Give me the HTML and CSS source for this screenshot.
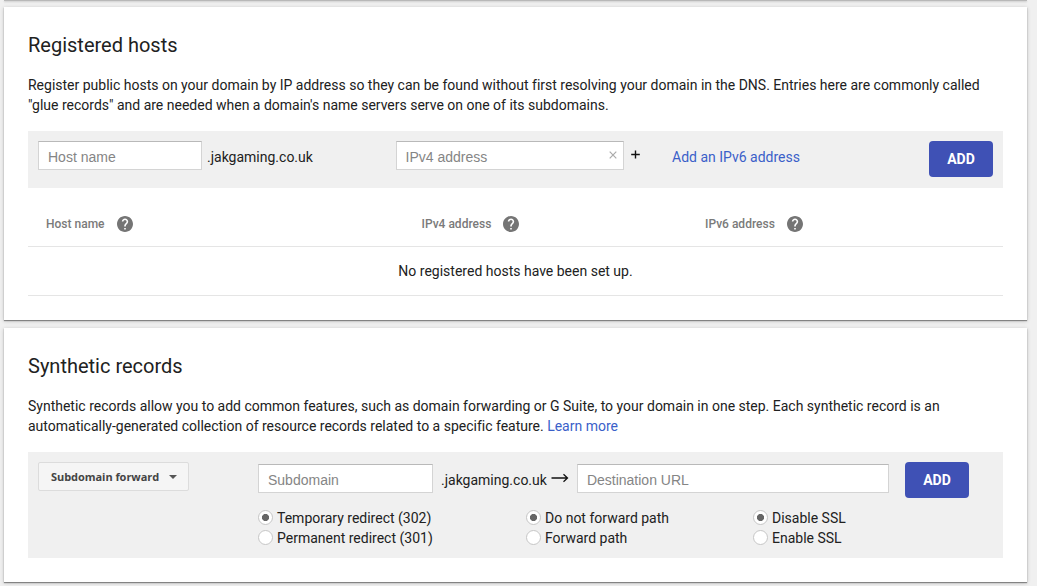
FILE: index.html
```html
<!DOCTYPE html>
<html lang="en">
<head>
<meta charset="utf-8">
<title>DNS settings</title>
<link rel="stylesheet" href="styles.css">
</head>
<body>
<svg class="defs" aria-hidden="true">
  <symbol id="help" viewBox="2 2 20 20"><path d="M12 2C6.48 2 2 6.48 2 12s4.480 10 10 10 10-4.480 10-10S17.520 2 12 2zm1 17h-2v-2h2v2zm2.070-7.750l-.9.920C13.450 12.900 13 13.500 13 15h-2v-.5c0-1.100.45-2.100 1.170-2.830l1.240-1.260c.37-.36.59-.86.59-1.410 0-1.100-.9-2-2-2s-2 .9-2 2H8c0-2.210 1.790-4 4-4s4 1.790 4 4c0 .88-.36 1.680-.93 2.250z"/></symbol>
</svg>
<div class="previous-card"></div>
<main class="page">
  <section class="card">
    <h2 class="title">Registered hosts</h2>
    <p class="intro">Register public hosts on your domain by IP address so they can be found without first resolving your domain in the DNS. Entries here are commonly called<br>"glue records" and are needed when a domain's name servers serve on one of its subdomains.</p>
    <form class="panel hosts-form">
      <input class="field host-field" type="text" placeholder="Host name">
      <span class="suffix">.jakgaming.co.uk</span>
      <div class="field-wrap">
        <input class="field ip-field" type="text" placeholder="IPv4 address">
        <svg class="clear" viewBox="0 0 8 8"><path d="M.7.7l6.600 6.600M7.300.7L.7 7.300"/></svg>
      </div>
      <svg class="plus" viewBox="0 0 9 9"><path d="M4.500.5v8M.2 4.500h8.600"/></svg>
      <a class="link add-v6">Add an IPv6 address</a>
      <button class="add" type="button">ADD</button>
    </form>
    <div class="table-head">
      <div class="col">Host name<svg class="help"><use href="#help"/></svg></div>
      <div class="col">IPv4 address<svg class="help"><use href="#help"/></svg></div>
      <div class="col">IPv6 address<svg class="help"><use href="#help"/></svg></div>
    </div>
    <div class="table-empty">No registered hosts have been set up.</div>
  </section>
  <section class="card">
    <h2 class="title">Synthetic records</h2>
    <p class="intro">Synthetic records allow you to add common features, such as domain forwarding or G Suite, to your domain in one step. Each synthetic record is an<br>automatically-generated collection of resource records related to a specific feature. <a class="link">Learn more</a></p>
    <form class="panel synthetic-form">
      <button class="select" type="button">Subdomain forward<span class="caret"></span></button>
      <div class="forward">
        <div class="forward-row">
          <input class="field sub-field" type="text" placeholder="Subdomain">
          <span class="suffix">.jakgaming.co.uk</span>
          <svg class="arrow" viewBox="0 0 18 10"><path d="M.5 5h16M12.500 1.300L16.500 5l-4 3.700"/></svg>
          <input class="field dest-field" type="text" placeholder="Destination URL">
        </div>
        <div class="options">
          <div class="group">
            <label class="option"><input class="radio" type="radio" name="redirect" checked>Temporary redirect (302)</label>
            <label class="option"><input class="radio" type="radio" name="redirect">Permanent redirect (301)</label>
          </div>
          <div class="group">
            <label class="option"><input class="radio" type="radio" name="path" checked>Do not forward path</label>
            <label class="option"><input class="radio" type="radio" name="path">Forward path</label>
          </div>
          <div class="group">
            <label class="option"><input class="radio" type="radio" name="ssl" checked>Disable SSL</label>
            <label class="option"><input class="radio" type="radio" name="ssl">Enable SSL</label>
          </div>
        </div>
      </div>
      <button class="add" type="button">ADD</button>
    </form>
  </section>
</main>
</body>
</html>
```
FILE: styles.css
```css
* { box-sizing: border-box; }
body {
  margin: 0;
  height: 586px;
  overflow: hidden;
  background: #f0f0f0;
  color: #212121;
  font: 14px/20px Roboto, sans-serif;
}
.defs { display: none; }
.previous-card {
  height: 1px;
  margin: 0 10px 0 4px;
  background: #b8b8b8;
  box-shadow: 0 1px 2px rgba(0, 0, 0, .2);
}
.page {
  display: flex;
  flex-direction: column;
  gap: 8px;
  padding: 6px 10px 0 4px;
}
.card {
  padding: 24px;
  background: #fff;
  box-shadow: 0 1px 1px rgba(0, 0, 0, .38), 0 1px 4px rgba(0, 0, 0, .2);
}
.title {
  margin: 0 0 16px;
  font-size: 20px;
  font-weight: 400;
  line-height: 28px;
}
.intro { margin: 0 0 16px; white-space: nowrap; letter-spacing: -.004px; }
.link { color: #3b5fc9; }
.panel {
  display: flex;
  align-items: flex-start;
  padding: 10px;
  background: #f0f0f0;
}
.hosts-form { height: 57px; }
.synthetic-form { height: 106px; }
.field {
  display: block;
  height: 29px;
  margin: 0;
  padding: 3px 9px 0;
  border: 1px solid #d4d4d4;
  border-top-color: #b9b9b9;
  border-radius: 0;
  background: #fff;
  color: #212121;
  font: 14px "Liberation Sans", sans-serif;
}
.field::placeholder { color: #858585; opacity: 1; }
.host-field { width: 164px; }
.ip-field { width: 228px; padding-left: 8.500px; }
.sub-field { width: 175px; }
.dest-field { width: 312px; }
.hosts-form .suffix { width: 189px; margin: 6px 0 0 5px; }
.field-wrap { position: relative; }
.clear {
  position: absolute;
  top: 10px;
  right: 7px;
  width: 8px;
  height: 8px;
  fill: none;
  stroke: #aaa;
  stroke-width: 1.2;
}
.plus {
  width: 9px;
  height: 9px;
  margin: 9px 0 0 7px;
  stroke: #111;
  stroke-width: 1.4;
}
.add-v6 { margin: 6px 0 0 32px; }
.add {
  width: 64px;
  height: 36px;
  margin: 0 0 0 auto;
  padding: 0;
  border: 0;
  border-radius: 4px;
  background: #3f51b5;
  color: #fff;
  font: 700 14px Roboto, sans-serif;
}
.table-head {
  display: grid;
  grid-template-columns: 375.500px 283.500px 1fr;
  height: 59px;
  padding: 14px 0 0 18px;
  border-bottom: 1px solid #e5e5e5;
  color: #7a7a7a;
  font-size: 12px;
  font-weight: 500;
}
.col { display: flex; align-items: center; height: 44px; gap: 12px; }
.help { width: 16px; height: 16px; fill: #757575; }
.table-empty {
  height: 49px;
  border-bottom: 1px solid #e5e5e5;
  line-height: 48px;
  text-align: center;
}
.select {
  display: flex;
  align-items: center;
  justify-content: space-between;
  width: 151px;
  height: 29px;
  margin: 0;
  padding: 0 11px 0 12px;
  border: 1px solid #dcdcdc;
  border-radius: 2px;
  background: #f5f5f5;
  color: #444;
  font: 700 11px "Open Sans", sans-serif;
  letter-spacing: -.05px;
}
.caret {
  border: 4px solid transparent;
  border-top-color: #555;
  border-bottom: 0;
}
.forward { width: 631px; margin: 2px 0 0 69px; }
.forward-row { display: flex; }
.forward-row .suffix { margin: 6px 4px 0 8px; }
.arrow {
  width: 18px;
  height: 10px;
  margin: 9px 8px 0 0;
  fill: none;
  stroke: #111;
  stroke-width: 1.3;
}
.options {
  display: grid;
  grid-template-columns: 268px 227px 1fr;
  margin-top: 15px;
}
.option { display: flex; align-items: flex-start; }
.radio {
  appearance: none;
  width: 15px;
  height: 15px;
  margin: 2px 4px 0 0;
  border: 1px solid #c6c6c6;
  border-radius: 50%;
  background: #fff;
}
.radio:checked {
  background: radial-gradient(circle, #666 0 3.200px, #fff 3.900px);
}
.synthetic-form .add { margin-left: 16px; }
```
